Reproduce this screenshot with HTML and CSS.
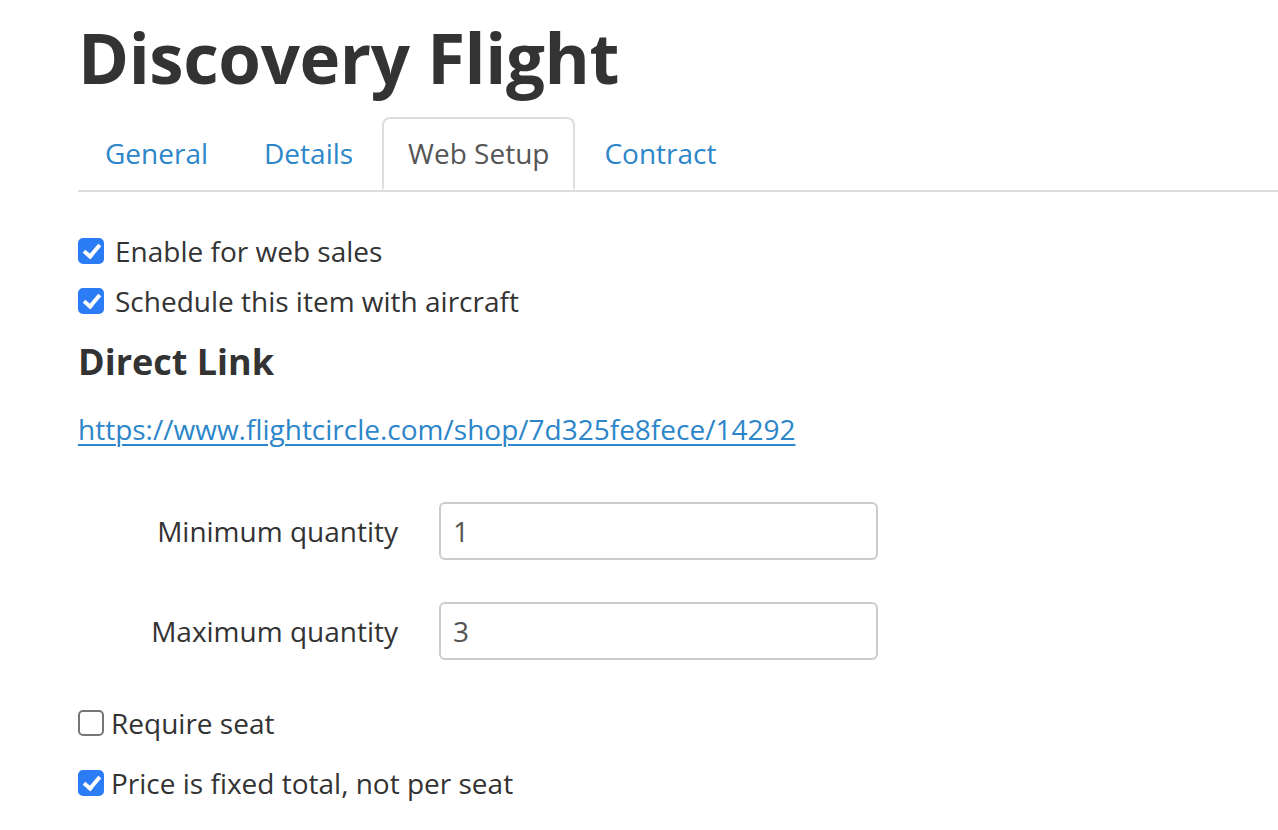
FILE: index.html
```html
<!DOCTYPE html>
<html>
<head>
<meta charset="utf-8">
<link rel="stylesheet" href="styles.css">
</head>
<body>
<div class="page">
  <h1 class="title">Discovery Flight</h1>
  <ul class="tabs">
    <li class="tab"><a href="#">General</a></li>
    <li class="tab"><a href="#">Details</a></li>
    <li class="tab active"><a href="#">Web Setup</a></li>
    <li class="tab"><a href="#">Contract</a></li>
  </ul>
  <div class="pane">
    <label class="check"><span class="box on"></span>Enable for web sales</label>
    <label class="check"><span class="box on"></span>Schedule this item with aircraft</label>
    <h4 class="subhead">Direct Link</h4>
    <a class="direct" href="#">https://www.flightcircle.com/shop/7d325fe8fece/14292</a>
    <div class="form">
      <div class="row"><span class="lbl">Minimum quantity</span><div class="input">1</div></div>
      <div class="row"><span class="lbl">Maximum quantity</span><div class="input">3</div></div>
    </div>
    <label class="check tight"><span class="box"></span>Require seat</label>
    <label class="check tight"><span class="box on"></span>Price is fixed total, not per seat</label>
  </div>
</div>
</body>
</html>
```

FILE: styles.css
```css
html, body {
  margin: 0;
  padding: 0;
  background: #fff;
}
body {
  font-family: "Open Sans", "Liberation Sans", sans-serif;
  font-size: 28px;
  color: #333;
}
.page {
  padding-left: 78px;
}
.title {
  margin: 0;
  font-size: 69px;
  font-weight: 700;
  line-height: 1;
  padding-top: 23px;
  height: 94px;
  letter-spacing: -0.4px;
  color: #333;
}
.tabs {
  list-style: none;
  margin: 0;
  padding: 0;
  display: flex;
  border-bottom: 2px solid #ddd;
  height: 73px;
}
.tab {
  margin-right: 2px;
  margin-bottom: -2px;
}
.tab a {
  display: flex;
  align-items: center;
  height: 73px;
  box-sizing: border-box;
  padding: 0 25px 2px;
  color: #2c86c9;
  text-decoration: none;
  border: 2px solid transparent;
  border-radius: 8px 8px 0 0;
}
.tab.active a {
  color: #555;
  border-color: #ddd;
  border-bottom-color: #fff;
  background: #fff;
  padding: 0 24px 2px;
}
.pane {
  padding-top: 46px;
}
.check {
  display: flex;
  align-items: center;
  height: 26px;
  margin-bottom: 24px;
  line-height: 26px;
}
.box {
  width: 26px;
  height: 26px;
  box-sizing: border-box;
  border-radius: 5px;
  border: 2px solid #767676;
  background: #fff;
  margin-right: 11px;
  flex: none;
  position: relative;
}
.check.tight .box {
  margin-right: 7px;
}
.box.on {
  background: #2b7cf5;
  border-color: #2b7cf5;
}
.box.on::after {
  content: "";
  position: absolute;
  left: 7px;
  top: 1px;
  width: 6px;
  height: 13px;
  border: solid #fff;
  border-width: 0 4px 4px 0;
  transform: rotate(40deg);
}
.subhead {
  margin: 10px 0 0;
  font-size: 36px;
  font-weight: 700;
  line-height: 48px;
  height: 48px;
}
.direct {
  display: block;
  margin-top: 23px;
  color: #2c86c9;
  text-decoration: underline;
  text-underline-offset: 4px;
  text-decoration-thickness: 2px;
  line-height: 40px;
  width: max-content;
}
.form {
  padding-top: 53px;
  padding-bottom: 50px;
}
.row {
  display: flex;
  align-items: center;
  margin-bottom: 42px;
}
.row:last-child {
  margin-bottom: 0;
}
.lbl {
  width: 361px;
  text-align: right;
  padding-right: 41px;
  box-sizing: border-box;
}
.input {
  width: 439px;
  height: 58px;
  box-sizing: border-box;
  border: 2px solid #ccc;
  border-radius: 6px;
  padding: 0 12px;
  display: flex;
  align-items: center;
  color: #555;
}
.check.tight {
  margin-bottom: 34px;
}
```
